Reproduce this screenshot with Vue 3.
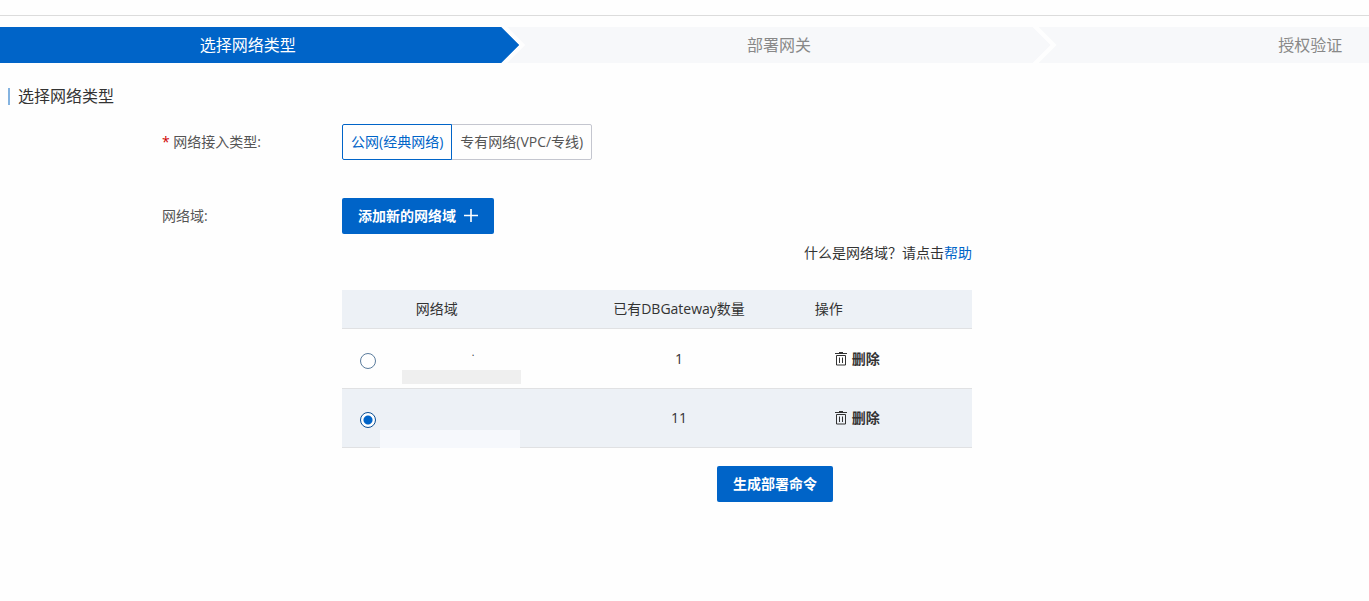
<script setup>
import { ref } from 'vue'

const steps = ['选择网络类型', '部署网关', '授权验证']
const currentStep = ref(0)

const networkTypes = [
  { value: 'public', label: '公网(经典网络)' },
  { value: 'vpc', label: '专有网络(VPC/专线)' },
]
const networkType = ref('public')

const domains = ref([
  { id: 1, name: '.', count: 1 },
  { id: 2, name: '', count: 11 },
])
const selected = ref(2)

function removeDomain(id) {
  domains.value = domains.value.filter((d) => d.id !== id)
}
</script>

<template>
  <div class="page">
    <ol class="steps">
      <li v-for="(step, i) in steps" :key="step" class="step" :class="{ active: i === currentStep }">{{ step }}</li>
    </ol>

    <h2 class="title">选择网络类型</h2>

    <form class="form" @submit.prevent>
      <div class="row">
        <span id="type-label" class="label"><i class="required">*</i> 网络接入类型:</span>
        <div class="segment" role="radiogroup" aria-labelledby="type-label">
          <label v-for="t in networkTypes" :key="t.value" class="segment-item" :class="{ checked: networkType === t.value }">
            <input v-model="networkType" type="radio" name="networkType" :value="t.value">
            {{ t.label }}
          </label>
        </div>
      </div>

      <div class="row">
        <span class="label">网络域:</span>
        <div class="content">
          <button type="button" class="btn">
            添加新的网络域
            <svg class="plus" viewBox="0 0 14 14" width="14" height="14">
              <path d="M7 0v13M0 6.500h14" fill="none" stroke="#fff" stroke-width="1.600" />
            </svg>
          </button>
          <p class="help">什么是网络域？请点击<a href="#">帮助</a></p>

          <table class="table">
            <thead>
              <tr>
                <th class="col-radio"></th>
                <th class="col-name">网络域</th>
                <th class="col-count">已有DBGateway数量</th>
                <th class="col-action">操作</th>
              </tr>
            </thead>
            <tbody>
              <tr v-for="d in domains" :key="d.id" :class="{ selected: selected === d.id }">
                <td class="col-radio">
                  <input v-model="selected" class="radio" type="radio" name="domain" :value="d.id" :aria-label="'网络域 ' + d.id">
                </td>
                <td class="col-name">
                  <div class="name">{{ d.name }}</div>
                  <div class="mask"></div>
                </td>
                <td class="col-count">{{ d.count }}</td>
                <td class="col-action">
                  <button type="button" class="remove" @click="removeDomain(d.id)">
                    <svg viewBox="0 0 12 14" width="12" height="14" fill="none" stroke="#333">
                      <path d="M0 1.500h12M4 .5h4" />
                      <path d="M1.500 3.500h9v9.500h-9z" />
                      <path d="M4.500 5.500v5.500M7.500 5.500v5.500" />
                    </svg>
                    删除
                  </button>
                </td>
              </tr>
            </tbody>
          </table>

          <button type="submit" class="btn submit">生成部署命令</button>
        </div>
      </div>
    </form>
  </div>
</template>

<style>
body {
  background: #fefefe;
  overflow: hidden;
}
</style>

<style scoped>
.page {
  margin-top: 15px;
  padding-top: 11px;
  border-top: 1px solid #dcdcdc;
  overflow: hidden;
  color: #333;
  font-family: "Open Sans", "Noto Sans CJK SC", sans-serif;
  font-size: 14px;
  line-height: 20px;
}

/* Arrow shaped steps, the last one runs off the page */
.steps {
  display: flex;
  margin: 0 0 0 -24px;
  padding: 0;
  list-style: none;
}

.step {
  flex: 0 0 39%;
  height: 36px;
  background: #f7f8fa;
  color: #888;
  font-size: 16px;
  line-height: 36px;
  text-align: center;
  clip-path: polygon(0 0, calc(100% - 18px) 0, 100% 50%, calc(100% - 18px) 100%, 0 100%, 18px 50%);
}

.step + .step {
  margin-left: -12px;
}

.step.active {
  background: #0064c8;
  color: #fff;
}

.title {
  display: flex;
  align-items: center;
  margin: 23px 0 18px 8px;
  font-size: 16px;
  font-weight: normal;
  line-height: 20px;
}

.title::before {
  content: "";
  width: 2px;
  height: 17px;
  margin-right: 8px;
  background: #84b3e0;
}

.form {
  padding-left: 162px;
}

.row {
  display: grid;
  grid-template-columns: 180px minmax(0, 630px);
  margin-bottom: 38px;
}

.label {
  color: #555;
  line-height: 36px;
}

.required {
  color: #d00000;
  font-style: normal;
}

.segment {
  display: flex;
}

.segment-item {
  padding: 0 8px;
  border: 1px solid #c4c6cf;
  border-radius: 0 2px 2px 0;
  color: #555;
  line-height: 34px;
  cursor: pointer;
}

.segment-item + .segment-item {
  margin-left: -1px;
}

.segment-item:first-child {
  border-radius: 2px 0 0 2px;
}

.segment-item.checked {
  position: relative;
  border-color: #0064c8;
  color: #0064c8;
}

.segment-item input {
  position: absolute;
  opacity: 0;
  pointer-events: none;
}

.btn {
  display: flex;
  align-items: center;
  height: 36px;
  padding: 0 16px;
  border: none;
  border-radius: 2px;
  background: #0064c8;
  color: #fff;
  font: inherit;
  font-weight: bold;
  cursor: pointer;
}

.plus {
  margin-left: 8px;
}

.help {
  margin: 9px 0 27px;
  text-align: right;
}

.help a {
  color: #0064c8;
  text-decoration: none;
}

.table {
  width: 100%;
  table-layout: fixed;
  border-collapse: separate;
  border-spacing: 0;
}

th,
td {
  padding: 0;
  border-bottom: 1px solid #e0e1e3;
}

th {
  height: 38px;
  background: #edf1f6;
  font-weight: normal;
  text-align: left;
}

td {
  height: 59px;
}

.selected td {
  height: 58px;
  background: #edf1f6;
}

.col-radio {
  width: 6%;
}

.col-name {
  width: 32%;
}

.col-count {
  width: 31%;
  text-align: center;
}

.col-action {
  width: 31%;
}

td.col-radio {
  padding-left: 18px;
}

th.col-name {
  text-indent: 36px;
}

td.col-name {
  vertical-align: bottom;
}

td.col-count {
  line-height: 24px;
}

th.col-action {
  text-indent: 38px;
}

td.col-action {
  padding-left: 58px;
}

.radio {
  display: block;
  appearance: none;
  width: 16px;
  height: 16px;
  margin: 4px 0 0;
  border: 1px solid #5b7c9d;
  border-radius: 50%;
  background: #fff;
}

.radio:checked {
  border-color: #0a4f94;
  background: radial-gradient(circle, #0064c8 4px, #fff 5px);
}

.name {
  height: 16px;
  margin-left: 92px;
  font-size: 10px;
  line-height: 16px;
}

.mask {
  width: 119px;
  height: 14px;
  margin: 10px 0 4px 22px;
  background: #efefef;
}

.selected .mask {
  position: relative;
  width: 140px;
  height: 18px;
  margin: 0 0 -1px;
  background: #f6f8fc;
}

.remove {
  display: flex;
  align-items: center;
  gap: 5px;
  padding: 0;
  border: none;
  background: none;
  color: #333;
  font: inherit;
  font-weight: bold;
  cursor: pointer;
}

.submit {
  margin: 18px 0 0 375px;
}
</style>
